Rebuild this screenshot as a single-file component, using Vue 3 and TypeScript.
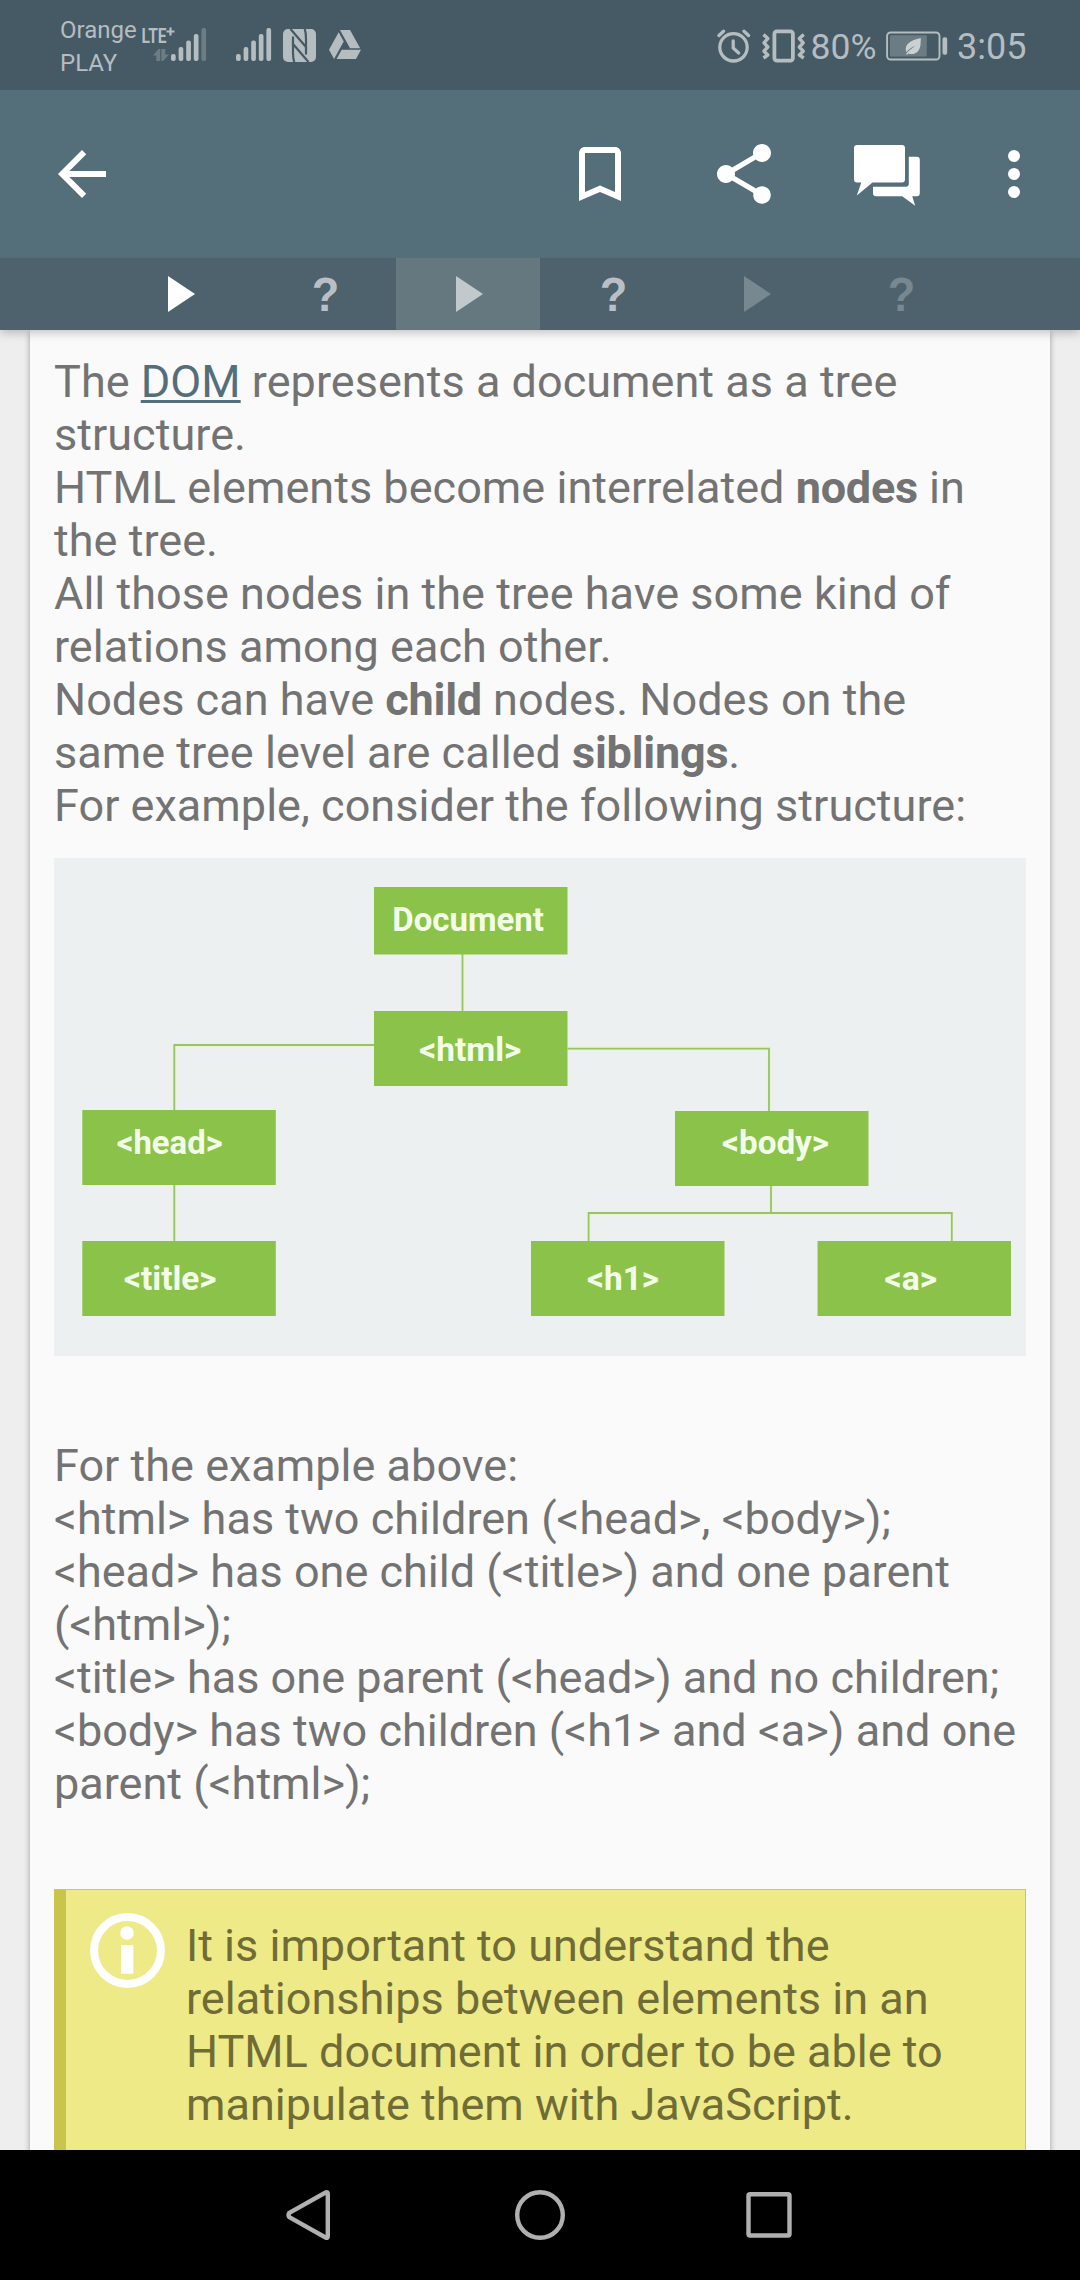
<script setup lang="ts">
interface Tab {
  kind: 'play' | 'quiz'
  tone: 'done' | 'open' | 'locked'
  active?: boolean
}

interface TreeNode {
  label: string
  x: number
  y: number
  height: number
  textX: number
  textY: number
  textWidth: number
}

const tabs: Tab[] = [
  { kind: 'play', tone: 'done' },
  { kind: 'quiz', tone: 'open' },
  { kind: 'play', tone: 'open', active: true },
  { kind: 'quiz', tone: 'open' },
  { kind: 'play', tone: 'locked' },
  { kind: 'quiz', tone: 'locked' },
]

const nodes: TreeNode[] = [
  { label: 'Document', x: 320, y: 29, height: 67.5, textX: 338.3, textY: 72.6, textWidth: 151.5 },
  { label: '<html>', x: 320, y: 153, height: 75, textX: 365.3, textY: 203, textWidth: 102 },
  { label: '<head>', x: 28.3, y: 252, height: 75, textX: 62.7, textY: 295.6, textWidth: 106 },
  { label: '<title>', x: 28.3, y: 383, height: 75, textX: 70, textY: 432, textWidth: 92.5 },
  { label: '<body>', x: 621, y: 253, height: 75, textX: 668, textY: 295.6, textWidth: 107 },
  { label: '<h1>', x: 477, y: 383, height: 75, textX: 533, textY: 432, textWidth: 72 },
  { label: '<a>', x: 763.5, y: 383, height: 75, textX: 830.5, textY: 432, textWidth: 52.5 },
]
</script>

<template>
  <div class="screen">
    <header class="header">
      <div class="status">
        <div class="carrier">Orange<br />PLAY</div>
        <svg class="lte" width="67" height="40" viewBox="141 25 67 40">
          <text x="141.5" y="43" font-size="20.5" font-weight="700" textLength="25" lengthAdjust="spacingAndGlyphs">LTE</text>
          <path d="M170.5 27.5v8M166.5 31.5h8" stroke="#b5bdc1" stroke-width="2.2" />
          <g fill="#6d7d85">
            <path d="M153 55.5l5.500-6.500h1.700v12h-4v-5.500z" />
            <path d="M169 54.500l-6 6.500h-1.700v-12h4v5.500z" />
          </g>
          <rect x="171" y="54" width="4.7" height="7" rx="2" />
          <rect x="178.6" y="47" width="4.7" height="14" rx="2" />
          <rect x="186.2" y="40.6" width="4.7" height="20.4" rx="2" />
          <rect x="193.8" y="34" width="4.7" height="27" rx="2" />
          <rect x="201.4" y="28" width="4.7" height="33" rx="2" fill="#6d7d85" />
        </svg>
        <svg class="signal" width="36" height="34" viewBox="236 28 36 34">
          <rect x="236" y="54" width="4.7" height="7" rx="2" />
          <rect x="243.6" y="47" width="4.7" height="14" rx="2" />
          <rect x="251.2" y="40.6" width="4.7" height="20.4" rx="2" />
          <rect x="258.8" y="34" width="4.7" height="27" rx="2" />
          <rect x="266.4" y="28" width="4.7" height="33" rx="2" />
        </svg>
        <svg class="nfc" width="33" height="33" viewBox="0 0 33 33">
          <rect width="33" height="33" rx="5" />
          <g fill="none" stroke="#455a64" stroke-width="2.2" stroke-linejoin="miter">
            <path d="M7.500 0L23 18V9.500C23 5 22.700 2.500 21.700 0" />
            <path d="M25.500 33L10 15v8.500C10 28 10.300 30.500 11.300 33" />
            <path d="M10 15V7.500" />
            <path d="M23 18v7.500" />
          </g>
        </svg>
        <svg class="drive" width="32" height="29" viewBox="1.150 2 21.700 19" preserveAspectRatio="none">
          <path d="M7.710 3.500L1.150 15l3.430 6 6.550-11.500zM9.730 15L6.300 21h13.120l3.430-6zM22.280 14L15.420 2H8.580l6.860 12z" />
        </svg>
        <div class="status-space"></div>
        <svg class="alarm" width="34" height="34" viewBox="717 28.500 34 34">
          <g fill="none" stroke="#b5bdc1" stroke-width="3.300" stroke-linecap="round" stroke-linejoin="round">
            <circle cx="733.500" cy="46.800" r="13.700" />
            <path d="M733.200 40.500v7l5.500 5" />
            <path d="M719 35l4.500-4.300M748.500 35l-4.500-4.300" />
          </g>
        </svg>
        <svg class="vibrate" width="43" height="34" viewBox="761.500 28.500 43 34">
          <g fill="none" stroke="#b5bdc1" stroke-linejoin="round">
            <rect x="773.900" y="30.900" width="18.500" height="29.200" rx="2.500" stroke-width="3.800" />
            <path d="M763 34l4.300 4-3.800 4.300 3.800 4.200-3.800 4.200 3.800 3.800-4.300 3M803.200 34l-4.300 4 3.800 4.300-3.800 4.200 3.800 4.200-3.800 3.800 4.300 3" stroke-width="3.400" />
          </g>
        </svg>
        <span class="percent">80%</span>
        <svg class="battery" width="62" height="30" viewBox="885.500 30.500 62 30">
          <rect x="886.600" y="32" width="52.400" height="27" rx="3.500" fill="none" stroke="#b5bdc1" stroke-width="1.900" />
          <rect x="889.500" y="34.800" width="36.800" height="21.200" rx="1" fill="#6b7c84" />
          <rect x="942" y="36.700" width="4.700" height="17.600" rx="1.800" />
          <path d="M920.500 37.500c-8 1.500-15 5-15.200 10.500-.1 1.500.1 2.500.6 3.500 3-3.500 6-5 9-6.300-3.500 2.500-7.400 5-9.400 8.600l1.300.4 1-1.200c7 2.300 11.500-2.500 12.200-8.500.2-2.500.1-5 .5-7z" fill="#cbd1d3" />
        </svg>
        <span class="clock">3:05</span>
      </div>

      <div class="toolbar">
        <svg class="icon" viewBox="0 0 24 24"><path d="M20 11H7.830l5.590-5.590L12 4l-8 8 8 8 1.410-1.410L7.830 13H20z" /></svg>
        <div class="actions">
          <svg class="icon" viewBox="0 0 24 24"><path d="M17 3H7c-1.100 0-2 .9-2 2v16l7-3 7 3V5c0-1.100-.9-2-2-2zm0 15l-5-2.180L7 18V5h10z" /></svg>
          <svg class="icon" viewBox="0 0 24 24"><path d="M18 16.080c-.76 0-1.440.3-1.960.77L8.910 12.700c.05-.23.090-.46.090-.7s-.04-.47-.09-.7l7.050-4.110c.54.5 1.250.81 2.040.81 1.660 0 3-1.340 3-3s-1.340-3-3-3-3 1.340-3 3c0 .24.040.47.090.7L8.040 9.810C7.500 9.310 6.790 9 6 9c-1.660 0-3 1.340-3 3s1.340 3 3 3c.79 0 1.500-.31 2.040-.81l7.120 4.160c-.05.21-.08.43-.08.65 0 1.610 1.310 2.920 2.920 2.920s2.920-1.310 2.920-2.920-1.310-2.920-2.920-2.920z" /></svg>
          <svg class="icon" viewBox="0 0 72 72">
            <path d="M5 7h45a3 3 0 0 1 3 3v31.500a3 3 0 0 1-3 3H20.500L4.800 57.500 9.300 44.500H5a3 3 0 0 1-3-3V10a3 3 0 0 1 3-3z" />
            <path d="M56.800 18.700h8a3 3 0 0 1 3 3v33.500a3 3 0 0 1-3 3h-4.600l3 9.500-13-9.500H24a3 3 0 0 1-3-3v-6.500h32.800a3 3 0 0 0 3-3z" />
          </svg>
        </div>
        <svg class="icon more" viewBox="0 0 24 24"><circle cx="12" cy="6" r="2" /><circle cx="12" cy="12" r="2" /><circle cx="12" cy="18" r="2" /></svg>
      </div>

      <nav class="tabs">
        <div v-for="(tab, i) in tabs" :key="i" class="tab" :class="[tab.tone, { active: tab.active }]">
          <svg v-if="tab.kind === 'play'" width="72" height="72" viewBox="0 0 72 72"><path d="M24 18V54L51 36z" /></svg>
          <span v-else class="quiz">?</span>
        </div>
      </nav>
    </header>

    <main class="content">
      <article class="card">
        <p class="text intro">
          The <a class="link">DOM</a> represents a document as a tree<br />structure.<br />
          HTML elements become interrelated <b>nodes</b> in<br />the tree.<br />
          All those nodes in the tree have some kind of<br />relations among each other.<br />
          Nodes can have <b>child</b> nodes. Nodes on the<br />same tree level are called <b>siblings</b>.<br />
          For example, consider the following structure:
        </p>

        <svg class="diagram" width="972" height="498" viewBox="0 0 972 498">
          <g fill="none" stroke="#e6f6d3" stroke-width="4">
            <path d="M408.500 96V153M320 187H120.300V252M120.300 327V383M513.500 190.600H715V253M717 328V355M534.600 383V355H897.800V383" />
          </g>
          <g fill="none" stroke="#98c26c" stroke-width="1.800">
            <path d="M408.500 96V153M320 187H120.300V252M120.300 327V383M513.500 190.600H715V253M717 328V355M534.600 383V355H897.800V383" />
          </g>
          <g v-for="node in nodes" :key="node.label">
            <rect :x="node.x" :y="node.y" width="193.500" :height="node.height" fill="#8bc34a" />
            <text
              :x="node.textX"
              :y="node.textY"
              :textLength="node.textWidth"
              lengthAdjust="spacingAndGlyphs"
              class="node-label"
            >{{ node.label }}</text>
          </g>
        </svg>

        <p class="text summary">
          For the example above:<br />
          &lt;html&gt; has two children (&lt;head&gt;, &lt;body&gt;);<br />
          &lt;head&gt; has one child (&lt;title&gt;) and one parent<br />(&lt;html&gt;);<br />
          &lt;title&gt; has one parent (&lt;head&gt;) and no children;<br />
          &lt;body&gt; has two children (&lt;h1&gt; and &lt;a&gt;) and one<br />parent (&lt;html&gt;);
        </p>

        <aside class="note">
          <svg width="75" height="75" viewBox="0 0 75 75">
            <circle cx="37.500" cy="37.500" r="33.400" fill="none" stroke="#fff" stroke-width="8" />
            <circle cx="37" cy="20" r="6.800" fill="#fff" />
            <rect x="31" y="32" width="12.300" height="28.700" fill="#fff" />
          </svg>
          <p class="text note-text">
            It is important to understand the<br />relationships between elements in an<br />HTML document in order to be able to<br />manipulate them with JavaScript.
          </p>
        </aside>
      </article>
    </main>

    <footer class="navbar">
      <svg width="50" height="54" viewBox="284 2188 50 54"><path d="M289.300 2212.800L326 2192.300Q327.800 2191.500 327.800 2194V2236Q327.800 2238.500 326 2237.700L289.300 2217.200Q287.800 2215 289.300 2212.800Z" /></svg>
      <svg width="54" height="54" viewBox="0 0 54 54"><circle cx="27" cy="27" r="22.800" /></svg>
      <svg width="50" height="54" viewBox="746 2188 50 54"><rect x="748.500" y="2194.200" width="41" height="41.300" rx="1.500" /></svg>
    </footer>
  </div>
</template>

<style>
body {
  margin: 0;
}
</style>

<style scoped>
.screen {
  width: 1080px;
  height: 2280px;
  display: flex;
  flex-direction: column;
  overflow: hidden;
  background: #eee;
  font-family: Roboto, "Liberation Sans", sans-serif;
}
.header {
  position: relative;
  z-index: 1;
  flex: none;
  box-shadow: 0 3px 9px rgba(0, 0, 0, 0.22);
}
.status {
  display: flex;
  align-items: flex-start;
  box-sizing: border-box;
  height: 90px;
  padding-left: 60px;
  background: #455a64;
  color: #b5bdc1;
  fill: #b5bdc1;
}
.status svg {
  flex: none;
}
.carrier {
  width: 81px;
  margin-top: 14px;
  font-size: 24px;
  line-height: 33px;
}
.lte {
  margin-top: 25px;
}
.signal {
  margin: 28px 0 0 28px;
}
.nfc {
  margin: 29px 0 0 11px;
}
.drive {
  margin: 30px 0 0 12.500px;
}
.status-space {
  flex: 1;
}
.alarm {
  margin-top: 28.500px;
}
.vibrate {
  margin: 28.500px 0 0 10.500px;
}
.percent {
  width: 75px;
  margin: 26px 0 0 6px;
  font-size: 35.500px;
  line-height: 42px;
}
.battery {
  margin-top: 30.500px;
}
.clock {
  width: 123px;
  margin: 26px 0 0 9.500px;
  font-size: 36px;
  line-height: 42px;
}
.toolbar {
  display: flex;
  align-items: center;
  box-sizing: border-box;
  height: 168px;
  padding: 0 30px 0 46px;
  background: #546e7a;
  fill: #fff;
}
.toolbar .icon {
  margin-bottom: 1px;
}
.icon {
  width: 72px;
  height: 72px;
  flex: none;
}
.actions {
  display: flex;
  gap: 72px;
  margin-left: auto;
}
.toolbar .more {
  margin-left: 54px;
}
.tabs {
  display: flex;
  justify-content: center;
  height: 72px;
  background: #4d626d;
}
.tab {
  width: 144px;
  display: flex;
  align-items: center;
  justify-content: center;
}
.tab.active {
  background: #65777f;
}
.done {
  color: #fff;
  fill: #fff;
}
.open {
  color: #b8c0c5;
  fill: #c1c9cc;
}
.locked {
  color: #778890;
  fill: #778890;
}
.quiz {
  font: 700 49px/72px "Liberation Sans", Arial, sans-serif;
  transform: translateX(1.500px) scaleX(0.92);
}
.content {
  flex: 1;
  min-height: 0;
  overflow: hidden;
  padding: 0 30px;
}
.card {
  box-sizing: border-box;
  height: 1860px;
  padding: 25px 24px 0;
  background: #fafafa;
  box-shadow: 0 2px 6px rgba(0, 0, 0, 0.34);
}
.text {
  margin: 0;
  font-size: 45px;
  line-height: 53px;
  color: #737373;
  white-space: nowrap;
}
.intro {
  letter-spacing: 0.030px;
}
.intro b {
  letter-spacing: -0.250px;
}
.link {
  color: #546e7a;
  text-decoration: underline;
  text-decoration-thickness: 2.500px;
  text-underline-offset: 3px;
  text-decoration-skip-ink: none;
}
.diagram {
  display: block;
  margin-top: 26px;
  background: #ecf0f1;
}
.node-label {
  font-size: 34px;
  font-weight: 700;
  fill: #f4ffe9;
}
.summary {
  margin-top: 83px;
  letter-spacing: 0.015px;
}
.note {
  display: flex;
  align-items: flex-start;
  box-sizing: border-box;
  height: 290px;
  margin-top: 79px;
  padding: 23px 24px;
  border: 1px solid #cac66a;
  border-left: 12px solid #c9c54c;
  background: #eeea88;
}
.note-text {
  margin: 6px 0 0 21px;
  color: #6f6c38;
}
.navbar {
  display: flex;
  align-items: center;
  justify-content: center;
  gap: 179px;
  height: 130px;
  flex: none;
  background: #000;
  fill: none;
  stroke: #b0b0b0;
  stroke-width: 4.400;
}
</style>
